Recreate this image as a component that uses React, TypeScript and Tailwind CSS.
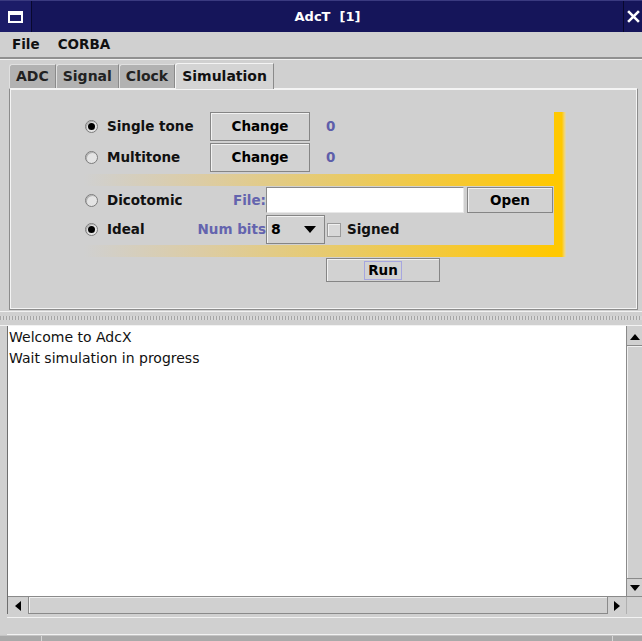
import React from "react";

const FONT = "font-['DejaVu_Sans','Liberation_Sans',sans-serif]";

function Radio({ checked }: { checked?: boolean }) {
  return (
    <span className="w-[13px] h-[13px] rounded-full border border-[#7c7c7c] bg-[#e4e4e4] flex items-center justify-center shrink-0 shadow-[inset_1px_1px_0_#b0b0b0]">
      {checked && <span className="w-[7px] h-[7px] rounded-full bg-black" />}
    </span>
  );
}

function Btn({ children, className }: { children: React.ReactNode; className: string }) {
  return (
    <div
      className={
        "flex items-center justify-center border border-[#858585] bg-[#d2d2d2] shadow-[inset_1px_1px_0_#f2f2f2] text-[13.5px] font-bold text-black shrink-0 " +
        className
      }
    >
      {children}
    </div>
  );
}

function Choice({ label, checked, width }: { label: string; checked?: boolean; width: string }) {
  return (
    <div className={"flex items-center shrink-0 " + width}>
      <span className="ml-[1px]">
        <Radio checked={checked} />
      </span>
      <span className="ml-[9px] text-[13.5px] font-bold text-[#111]">{label}</span>
    </div>
  );
}

function Tab({ label, active }: { label: string; active?: boolean }) {
  return (
    <div
      className={
        "h-[24px] flex items-center px-[6px] text-[14px] font-bold border-t border-l border-r rounded-tl-[3px] " +
        (active
          ? "bg-[#d4d4d4] border-[#f4f4f4] border-r-[#8a8a8a] text-[#111] h-[26px] -mb-[1px] z-10"
          : "bg-[#b2b2b2] border-[#e0e0e0] border-r-[#8a8a8a] text-[#222]")
      }
    >
      {label}
    </div>
  );
}

export default function App() {
  return (
    <div className={"w-[642px] h-[641px] bg-[#d0d0d0] flex flex-col overflow-hidden " + FONT}>
      {/* title bar */}
      <div className="h-[32px] flex bg-[#15155a] border-t border-[#3a3a80] shrink-0">
        <div className="w-[32px] flex items-center justify-center bg-[#1c1c68] border-r border-[#08082e]">
          <div className="w-[15px] h-[12px] border-[2px] border-t-[4px] border-white" />
        </div>
        <div className="flex-1 flex items-center justify-center text-white text-[13px] font-bold">
          AdcT&nbsp;&nbsp;[1]
        </div>
        <div className="w-[19px] flex items-center justify-center border-l border-[#08082e] text-white">
          <svg width="13" height="13" viewBox="0 0 12 12">
            <path d="M1 1 L11 11 M11 1 L1 11" stroke="white" strokeWidth="2.4" />
          </svg>
        </div>
      </div>

      {/* menu bar */}
      <div className="h-[27px] flex items-center gap-[18px] pl-[12px] text-[13.5px] font-bold text-[#111] border-b-[2px] border-[#909090] shadow-[0_1px_0_#f0f0f0] shrink-0">
        <span>File</span>
        <span>CORBA</span>
      </div>

      {/* tab strip */}
      <div className="h-[29px] flex items-end pl-[9px] shrink-0">
        <Tab label="ADC" />
        <Tab label="Signal" />
        <Tab label="Clock" />
        <Tab label="Simulation" active />
      </div>

      {/* tab panel */}
      <div className="ml-[9px] mr-[4px] h-[222px] border border-[#8c8c8c] border-t-[#f4f4f4] shadow-[inset_1px_1px_0_#f4f4f4,inset_-1px_-1px_0_#f4f4f4] pl-[74px] pt-[23px] shrink-0">
        <div className="flex w-[482px] h-[145px]">
          <div className="w-[470px] flex flex-col">
            <div className="h-[62px] flex flex-col">
              <div className="h-[29px] flex items-center">
                <Choice label="Single tone" checked width="w-[126px]" />
                <Btn className="w-[100px] h-[29px]">Change</Btn>
                <span className="ml-[16px] text-[13.5px] font-bold text-[#5e5eaa]">0</span>
              </div>
              <div className="h-[29px] mt-[2px] flex items-center">
                <Choice label="Multitone" width="w-[126px]" />
                <Btn className="w-[100px] h-[29px]">Change</Btn>
                <span className="ml-[16px] text-[13.5px] font-bold text-[#5e5eaa]">0</span>
              </div>
            </div>
            <div className="h-[12px] bg-[linear-gradient(90deg,#d0d0d0_0%,#dccca4_25%,#e8ca68_55%,#f6c830_80%,#ffc800_100%)]" />
            <div className="h-[59px] pt-[1px] flex flex-col">
              <div className="h-[26px] flex items-center">
                <Choice label="Dicotomic" width="w-[110px]" />
                <span className="w-[72px] text-right text-[13.5px] font-bold text-[#6464ae]">File:</span>
                <div className="w-[198px] h-[26px] bg-white border border-[#8a8a8a] border-b-[#e8e8e8] border-r-[#e8e8e8] shrink-0" />
                <Btn className="ml-[3px] w-[86px] h-[26px]">Open</Btn>
              </div>
              <div className="h-[29px] mt-[2px] flex items-center">
                <Choice label="Ideal" checked width="w-[110px]" />
                <span className="w-[72px] text-right text-[13.5px] font-bold text-[#6464ae] whitespace-nowrap">
                  Num bits
                </span>
                <div className="w-[59px] h-[29px] border border-[#858585] bg-[#d2d2d2] shadow-[inset_1px_1px_0_#f2f2f2] flex items-center pl-[4px] pr-[8px] justify-between shrink-0">
                  <span className="text-[14px] font-bold text-black">8</span>
                  <svg width="12" height="7" viewBox="0 0 12 7">
                    <path d="M0 0 H12 L6 7 Z" fill="black" />
                  </svg>
                </div>
                <span className="ml-[2px] w-[14px] h-[14px] border border-[#9a9a9a] bg-[#d8d8d8] shadow-[inset_1px_1px_0_#f0f0f0] shrink-0" />
                <span className="ml-[6px] text-[13.5px] font-bold text-[#111]">Signed</span>
              </div>
            </div>
            <div className="h-[12px] bg-[linear-gradient(90deg,#d0d0d0_0%,#dccca4_25%,#e8ca68_55%,#f6c830_80%,#ffc800_100%)]" />
          </div>
          <div className="w-[12px] bg-[linear-gradient(90deg,#ffc800_0%,#ffc800_65%,#f2d470_85%,#d8d4c0_100%)]" />
        </div>
        <Btn className="ml-[242px] mt-[1px] w-[114px] h-[24px]">
          <span className="border border-[#a6a6e0] px-[3px] leading-[17px]">Run</span>
        </Btn>
      </div>

      {/* split divider */}
      <div className="h-[15px] mt-[1px] flex flex-col shrink-0 border-t border-[#f2f2f2] border-b border-[#8e8e8e]">
        <div className="mt-[4px] h-[4px] bg-[repeating-linear-gradient(90deg,#a6a6a6_0_1px,#d8d8d8_1px_3px)]" />
      </div>

      {/* log area */}
      <div className="ml-[7px] h-[288px] flex flex-col border-l border-[#6e6e6e] shrink-0">
        <div className="h-[270px] flex">
          <div className="flex-1 bg-white pt-[1px] pl-[1px] text-[14px] leading-[21px] text-[#111]">
            <div>Welcome to AdcX</div>
            <div>Wait simulation in progress</div>
          </div>
          <div className="w-[16px] flex flex-col border-l border-[#8a8a8a] bg-[#d0d0d0]">
            <div className="h-[18px] mt-[2px] border-b border-[#8a8a8a] flex items-center justify-center">
              <svg width="10" height="6" viewBox="0 0 10 6">
                <path d="M0 6 H10 L5 0 Z" fill="black" />
              </svg>
            </div>
            <div className="flex-1 border-b border-[#8a8a8a] shadow-[inset_1px_1px_0_#f0f0f0]" />
            <div className="h-[17px] flex items-center justify-center">
              <svg width="10" height="6" viewBox="0 0 10 6">
                <path d="M0 0 H10 L5 6 Z" fill="black" />
              </svg>
            </div>
          </div>
        </div>
        <div className="h-[18px] flex border-t border-[#8a8a8a]">
          <div className="w-[21px] border-r border-[#8a8a8a] flex items-center justify-center">
            <svg width="6" height="10" viewBox="0 0 6 10">
              <path d="M6 0 V10 L0 5 Z" fill="black" />
            </svg>
          </div>
          <div className="flex-1 shadow-[inset_1px_1px_0_#f0f0f0] border-b border-[#8a8a8a]" />
          <div className="w-[19px] border-l border-[#8a8a8a] flex items-center justify-center">
            <svg width="6" height="10" viewBox="0 0 6 10">
              <path d="M0 0 V10 L6 5 Z" fill="black" />
            </svg>
          </div>
          <div className="w-[16px] border-l border-[#b0b0b0]" />
        </div>
      </div>

      {/* status strip */}
      <div className="mt-[3px] ml-[7px] h-[18px] border-t border-[#f2f2f2] border-b border-[#909090] shrink-0" />
      <div className="flex-1 flex bg-[#a9a9a9] border-t border-[#c4c4c4]">
        <div className="w-[42px] border-r border-[#d6d6d6]" />
        <div className="w-[571px] border-r border-[#d6d6d6]" />
      </div>
    </div>
  );
}
